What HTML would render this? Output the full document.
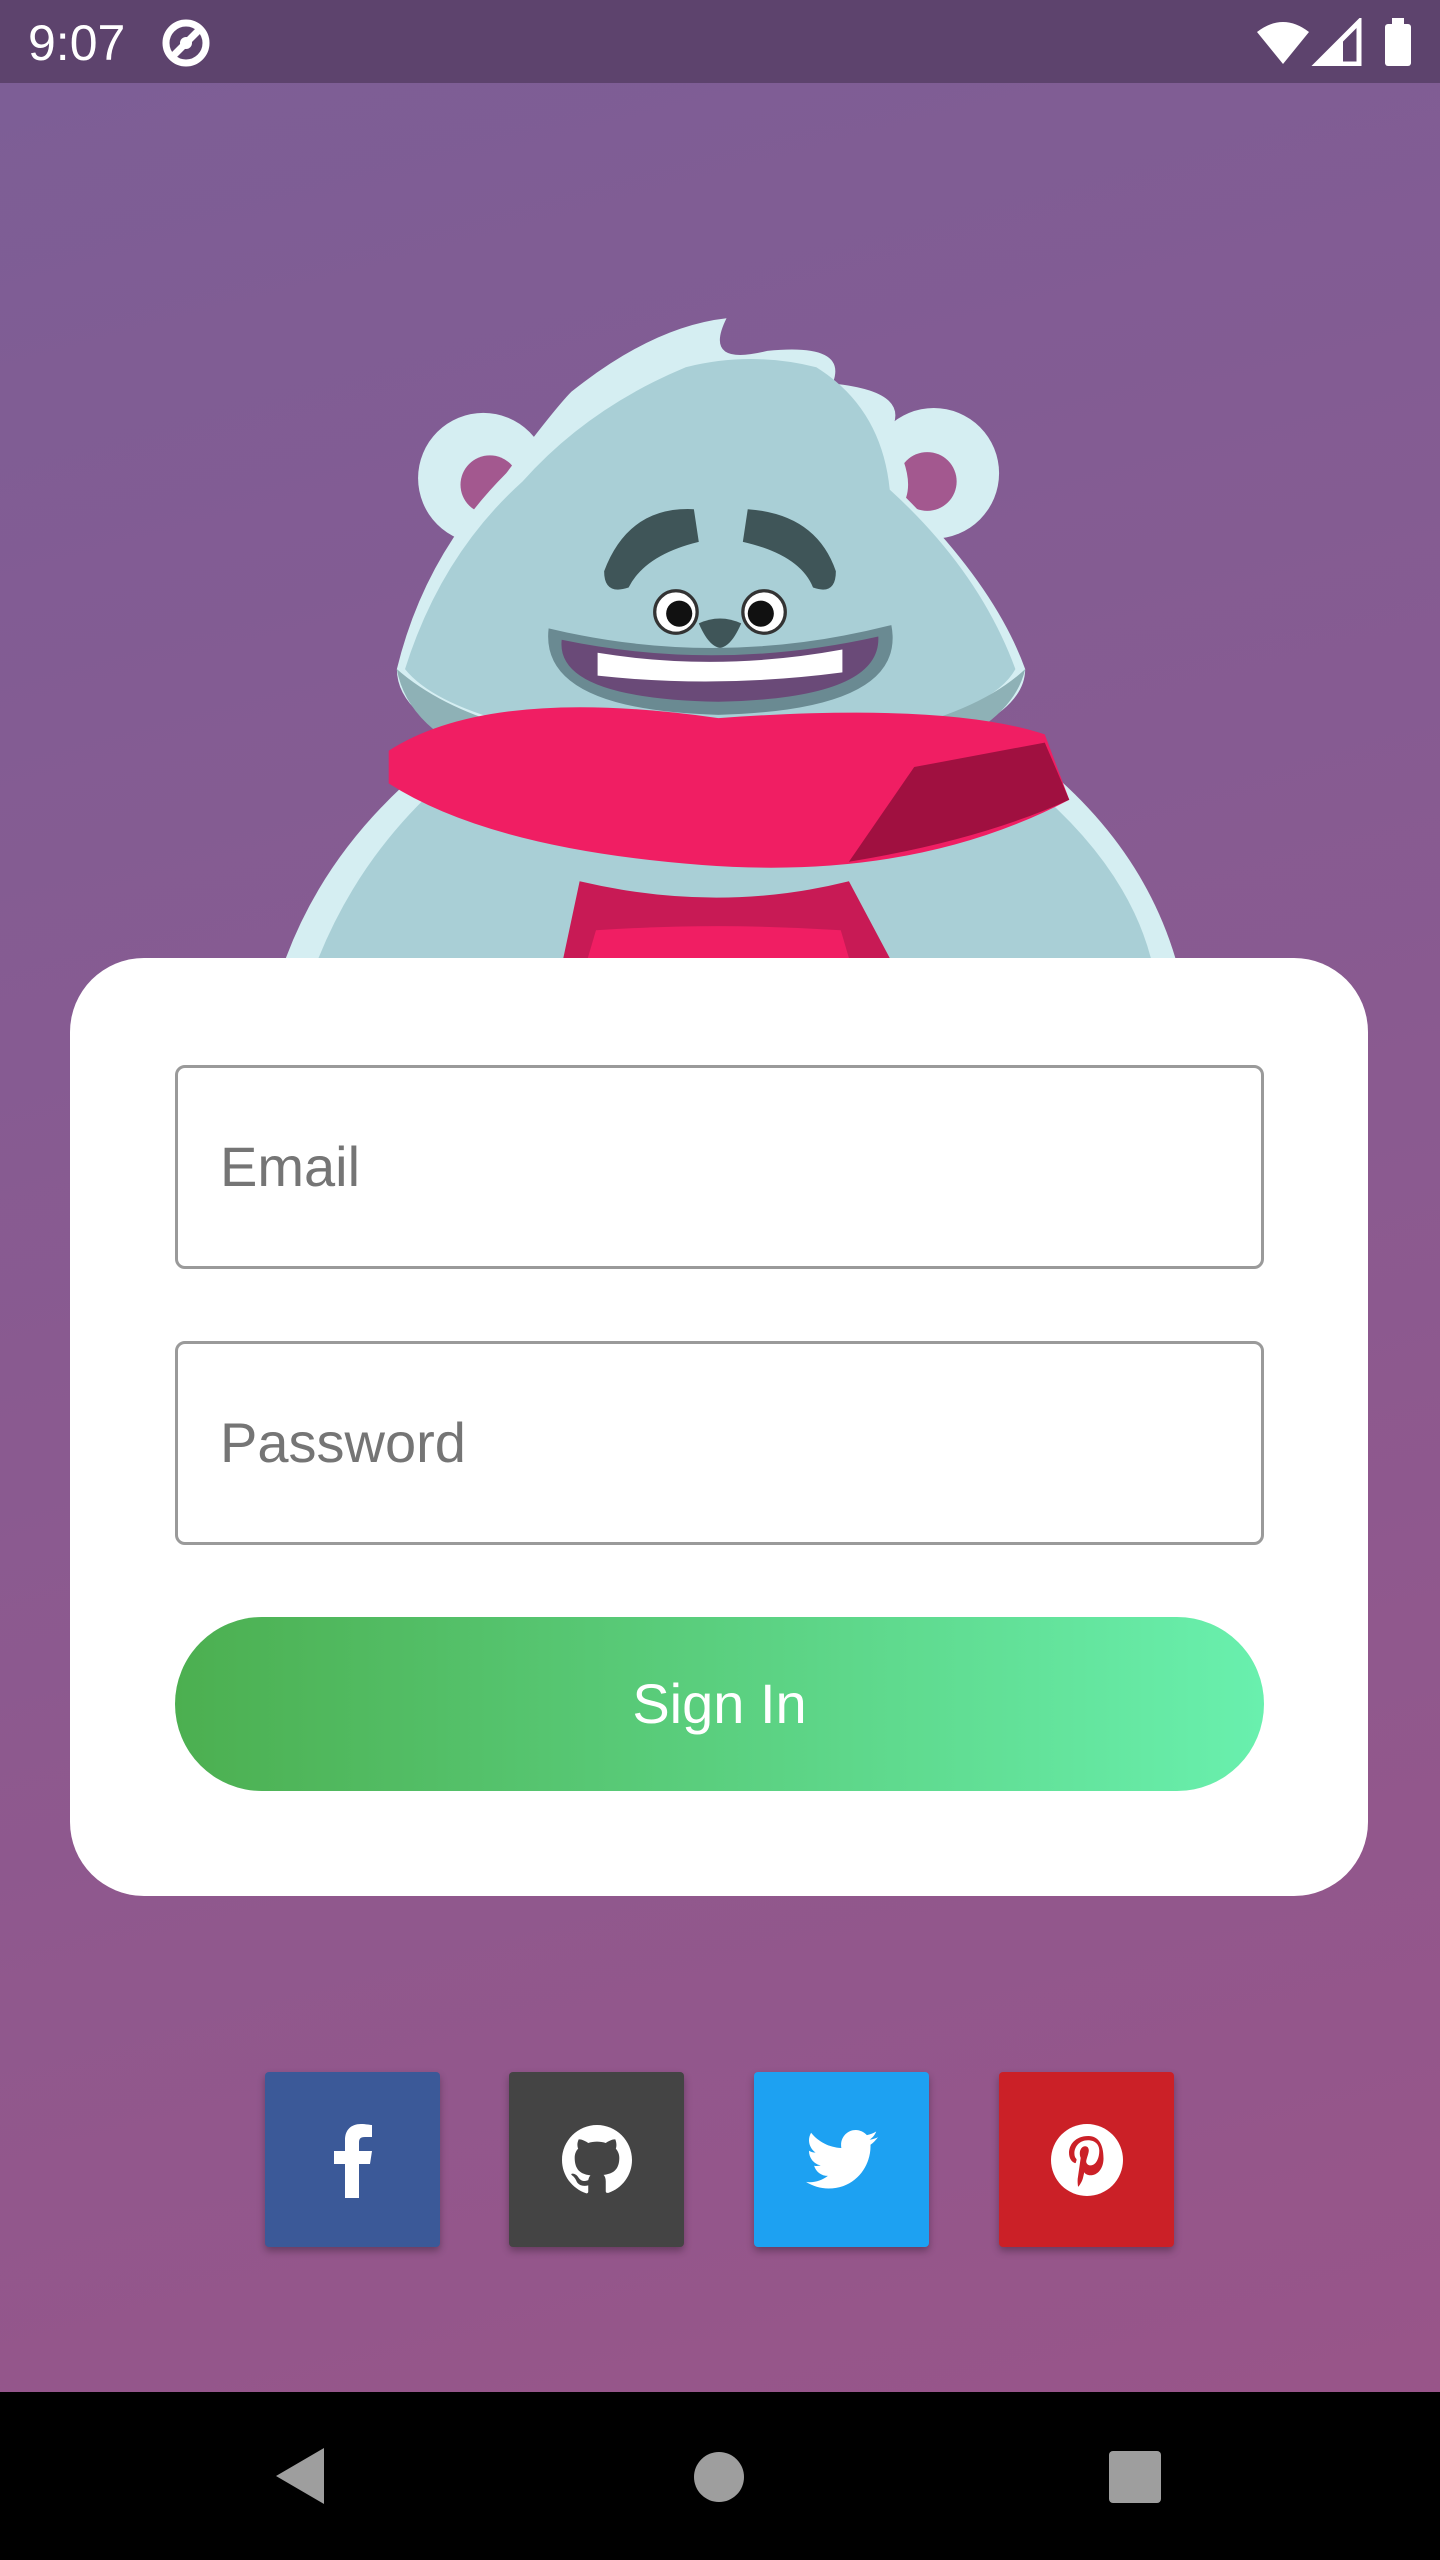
<!DOCTYPE html>
<html><head><meta charset="utf-8"><style>
*{margin:0;padding:0;box-sizing:border-box}
body{width:1440px;height:2560px;position:relative;overflow:hidden;font-family:"Liberation Sans",sans-serif;background:linear-gradient(165deg,#7c5e96 0%,#8a5a90 50%,#9a5488 100%)}
.status{position:absolute;left:0;top:0;width:1440px;height:83px;background:#5d436d;color:#fff}
.card{position:absolute;left:70px;top:958px;width:1298px;height:938px;background:#fff;border-radius:74px}
.field{position:absolute;left:175px;width:1089px;height:204px;border:3px solid #9a9a9a;border-radius:10px;font-size:56px;color:#757575;padding-left:42px;line-height:198px}
.btn{position:absolute;left:175px;top:1617px;width:1089px;height:174px;border-radius:87px;background:linear-gradient(90deg,#4caf50,#69f0ae);color:#fff;font-size:56px;text-align:center;line-height:174px}
.soc{position:absolute;top:2072px;width:175px;height:175px;border-radius:4px;box-shadow:0 4px 8px rgba(0,0,0,.3);display:flex;align-items:center;justify-content:center}
.nav{position:absolute;left:0;top:2392px;width:1440px;height:168px;background:#000}
</style></head><body>
<div class="status">
<div style="position:absolute;left:28px;top:14px;font-size:50px">9:07</div>
<svg style="position:absolute;left:160px;top:17px" width="52" height="52" viewBox="0 0 52 52"><circle cx="26" cy="26" r="20" fill="none" stroke="#fff" stroke-width="7"/><path d="M14 38 L38 14" stroke="#fff" stroke-width="7"/><circle cx="26" cy="26" r="6" fill="#fff"/></svg>
<svg style="position:absolute;left:1255px;top:18px" width="160" height="48" viewBox="0 0 160 48"><path d="M2 14 Q28 -6 54 14 L28 46 Z" fill="#fff"/><path d="M62 46 L104 4 L104 46 Z" fill="none" stroke="#fff" stroke-width="5"/><path d="M62 46 L88 20 L88 46Z" fill="#fff"/><rect x="130" y="6" width="26" height="42" rx="3" fill="#fff"/><rect x="137" y="0" width="12" height="8" fill="#fff"/></svg>
</div>
<svg style="position:absolute;left:0;top:0" width="1440" height="958" viewBox="0 0 882 587">
<path d="M175 587 Q200 520 260 470 L640 470 Q700 520 720 587Z" fill="#d5eef2"/>
<path d="M195 587 Q220 525 270 480 L630 480 Q690 530 705 587Z" fill="#a9cfd6"/>
<circle cx="296" cy="293" r="40" fill="#d5eef2"/><circle cx="300" cy="297" r="18" fill="#a3588f"/>
<circle cx="572" cy="290" r="40" fill="#d5eef2"/><circle cx="568" cy="295" r="18" fill="#a3588f"/>
<path d="M243 410 Q260 340 310 290 Q340 250 350 240 Q400 200 445 195 Q430 225 470 215 Q520 210 510 235 Q560 240 545 265 Q560 290 555 305 Q610 360 628 410 Q628 440 560 460 L300 460 Q243 440 243 410Z" fill="#d5eef2"/>
<path d="M248 410 Q270 340 320 295 Q360 250 420 225 Q460 215 500 225 Q540 250 545 300 Q600 350 622 410 Q600 450 440 462 Q280 450 248 410Z" fill="#a9cfd6"/>
<path d="M243 410 Q300 460 440 460 Q580 455 628 410 Q620 445 560 465 L310 470 Q250 450 243 410Z" fill="#8eb1b6"/>
<path d="M238 460 Q300 420 440 440 Q580 430 640 450 L655 490 Q560 540 430 530 Q300 520 238 480Z" fill="#f01e63"/>
<path d="M560 470 L640 455 L655 490 Q600 515 520 528Z" fill="#a01040"/>
<path d="M355 540 Q440 560 520 540 L545 587 L345 587Z" fill="#c81a55"/>
<path d="M365 570 Q440 565 515 570 L520 587 L360 587Z" fill="#f01e63"/>
<path d="M370 350 Q385 310 425 312 L428 332 Q395 340 385 360Q370 365 370 350Z" fill="#3f5558"/>
<path d="M512 350 Q500 315 458 312 L455 332 Q490 340 498 360 Q512 365 512 350Z" fill="#3f5558"/>
<path d="M336 385 Q440 410 546 383 Q556 435 440 438 Q330 435 336 385Z" fill="#6a8a92"/>
<path d="M344 392 Q440 412 538 390 Q540 428 440 430 Q340 428 344 392Z" fill="#6a4a78"/>
<path d="M366 400 Q440 412 516 398 L516 412 Q440 422 366 414Z" fill="#fff"/>
<circle cx="414" cy="375" r="13" fill="#fff" stroke="#333" stroke-width="2"/><circle cx="416" cy="376" r="8" fill="#111"/>
<circle cx="468" cy="375" r="13" fill="#fff" stroke="#333" stroke-width="2"/><circle cx="466" cy="376" r="8" fill="#111"/>
<path d="M428 382 Q441 376 454 382 Q448 396 441 397 Q434 396 428 382Z" fill="#3f5558"/>
</svg>
<div class="card"></div>
<div class="field" style="top:1065px">Email</div>
<div class="field" style="top:1341px">Password</div>
<div class="btn">Sign In</div>
<div class="soc" style="left:265px;background:#3b5998"><svg width="40" height="76" viewBox="0 0 40 76"><path d="M26 76V42h11l2-13H26v-8c0-4 1-6 6-6h7V3C37 3 33 2 28 2 18 2 12 8 12 18v11H1v13h11v34z" fill="#fff"/></svg></div>
<div class="soc" style="left:509px;background:#444"><svg width="70" height="70" viewBox="0 0 16 16"><path fill="#fff" d="M8 0C3.6 0 0 3.6 0 8c0 3.5 2.3 6.5 5.5 7.6.4.1.5-.2.5-.4v-1.4c-2.2.5-2.7-1-2.7-1-.4-.9-.9-1.2-.9-1.2-.7-.5.1-.5.1-.5.8.1 1.2.8 1.2.8.7 1.2 1.9.9 2.3.7.1-.5.3-.9.5-1.1-1.8-.2-3.6-.9-3.6-4 0-.9.3-1.6.8-2.1-.1-.2-.4-1 .1-2.1 0 0 .7-.2 2.2.8.6-.2 1.3-.3 2-.3s1.4.1 2 .3c1.5-1 2.2-.8 2.2-.8.4 1.1.2 1.9.1 2.1.5.6.8 1.3.8 2.1 0 3.1-1.9 3.7-3.6 3.9.3.3.5.8.5 1.5v2.2c0 .2.1.5.6.4C13.7 14.5 16 11.5 16 8c0-4.4-3.6-8-8-8z"/></svg></div>
<div class="soc" style="left:754px;background:#1da1f2"><svg width="72" height="60" viewBox="0 0 24 20"><path fill="#fff" d="M24 2.4c-.9.4-1.8.7-2.8.8 1-.6 1.8-1.6 2.2-2.7-1 .6-2 1-3.1 1.2C19.3.7 18 0 16.6 0c-2.7 0-4.9 2.2-4.9 4.9 0 .4 0 .8.1 1.1C7.7 5.8 4.1 3.9 1.7.9c-.4.7-.7 1.6-.7 2.5 0 1.7.9 3.2 2.2 4.1-.8 0-1.6-.2-2.2-.6v.1c0 2.4 1.7 4.4 3.9 4.8-.4.1-.8.2-1.3.2-.3 0-.6 0-.9-.1.6 2 2.4 3.4 4.6 3.4-1.7 1.3-3.8 2.1-6.1 2.1-.4 0-.8 0-1.2-.1 2.2 1.4 4.8 2.2 7.5 2.2 9.1 0 14-7.5 14-14v-.6c1-.7 1.8-1.6 2.5-2.5z"/></svg></div>
<div class="soc" style="left:999px;background:#cb2027"><svg width="72" height="72" viewBox="0 0 24 24"><circle cx="12" cy="12" r="12" fill="#fff"/><path fill="#cb2027" d="M12.5 4C8 4 6 7 6 9.6c0 1.5.6 2.9 1.9 3.4.2.1.4 0 .4-.2l.2-.7c.1-.2 0-.3-.1-.5-.4-.4-.6-1-.6-1.8 0-2.3 1.7-4.4 4.5-4.4 2.5 0 3.8 1.5 3.8 3.5 0 2.6-1.2 4.9-2.9 4.9-1 0-1.7-.8-1.4-1.8.3-1.1.8-2.4.8-3.2 0-.7-.4-1.4-1.2-1.4-1 0-1.8 1-1.8 2.4 0 .9.3 1.5.3 1.5L9 17.6c-.3 1.3 0 3 0 3.2 0 .1.1.1.2 0 .1-.1 1-1.3 1.4-2.6l.5-2.1c.3.6 1.1 1 2 1 2.6 0 4.4-2.4 4.4-5.6C17.5 6.3 15.5 4 12.5 4z"/></svg></div>
<div class="nav">
<svg style="position:absolute;left:274px;top:54px" width="52" height="60" viewBox="0 0 52 60"><path d="M50 2 L50 58 L2 30Z" fill="#9e9e9e"/></svg>
<div style="position:absolute;left:694px;top:60px;width:50px;height:50px;border-radius:50%;background:#9e9e9e"></div>
<div style="position:absolute;left:1109px;top:59px;width:52px;height:52px;border-radius:4px;background:#9e9e9e"></div>
</div>
</body></html>
